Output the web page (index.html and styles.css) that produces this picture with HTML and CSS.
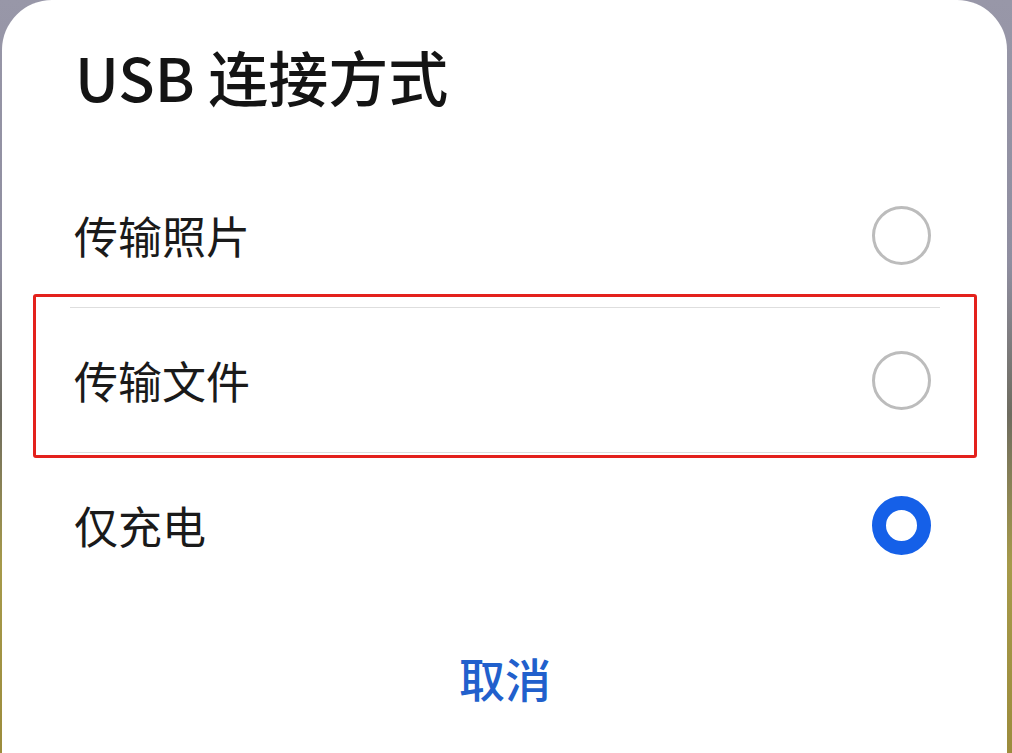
FILE: index.html
```html
<!DOCTYPE html>
<html lang="zh-CN">
<head>
    <meta charset="UTF-8">
    <meta name="viewport" content="width=device-width, initial-scale=1.0">
    <title>USB 连接方式</title>
    <link rel="stylesheet" href="styles.css">
</head>
<body>
    <div class="dialog">
        <h1 class="dialog-title">USB 连接方式</h1>

        <ul class="options">
            <li class="option">
                <span class="option-label">传输照片</span>
                <span class="radio"></span>
            </li>
            <!-- highlighted row -->
            <li class="option marked">
                <span class="option-label">传输文件</span>
                <span class="radio"></span>
                <span class="mark-box"></span>
            </li>
            <li class="option">
                <span class="option-label">仅充电</span>
                <span class="radio checked"></span>
            </li>
        </ul>

        <div class="actions">
            <button class="cancel-btn">取消</button>
        </div>
    </div>
</body>
</html>
```

FILE: styles.css
```css
html, body {
    height: 100%;
}

body {
    margin: 0;
    padding: 0;
    overflow: hidden;
    font-family: "Noto Sans CJK SC", "Noto Sans", sans-serif;
    background: linear-gradient(to bottom, #9897a8 0%, #8f8ea0 35%, #6e6c60 55%, #a69a4a 75%, #9c8c3c 100%);
}

.dialog {
    box-sizing: border-box;
    height: 100%;
    margin: 0 5px 0 2px;
    padding: 0 67px 0 68px;
    background-color: #ffffff;
    border-radius: 50px 50px 0 0;
}

.dialog-title {
    box-sizing: border-box;
    margin: 0;
    padding: 40px 0 0 5px;
    height: 163px;
    font-size: 60px;
    font-weight: 500;
    line-height: 1.2;
    color: #141414;
}

.options {
    list-style: none;
    margin: 0;
    padding: 0;
}

.option {
    position: relative;
    display: flex;
    align-items: center;
    justify-content: space-between;
    height: 144px;
    border-bottom: 1px solid #dedede;
}

.option:last-child {
    border-bottom: none;
}

.option-label {
    padding-left: 4px;
    font-size: 44px;
    color: #1a1a1a;
}

.radio {
    box-sizing: border-box;
    width: 59px;
    height: 59px;
    margin-right: 9px;
    border: 3px solid #bcbcbc;
    border-radius: 50%;
}

.radio.checked {
    border: 14px solid #1560e8;
}

.mark-box {
    position: absolute;
    top: -14px;
    left: -37px;
    right: -37px;
    bottom: -6px;
    border: 3px solid #e3211c;
    border-radius: 3px;
}

.actions {
    display: flex;
    justify-content: center;
    padding-top: 47px;
}

.cancel-btn {
    padding: 0;
    background: none;
    border: none;
    font-family: "Noto Sans CJK SC", sans-serif;
    font-size: 46px;
    font-weight: 500;
    color: #2160cc;
    cursor: pointer;
}
```
